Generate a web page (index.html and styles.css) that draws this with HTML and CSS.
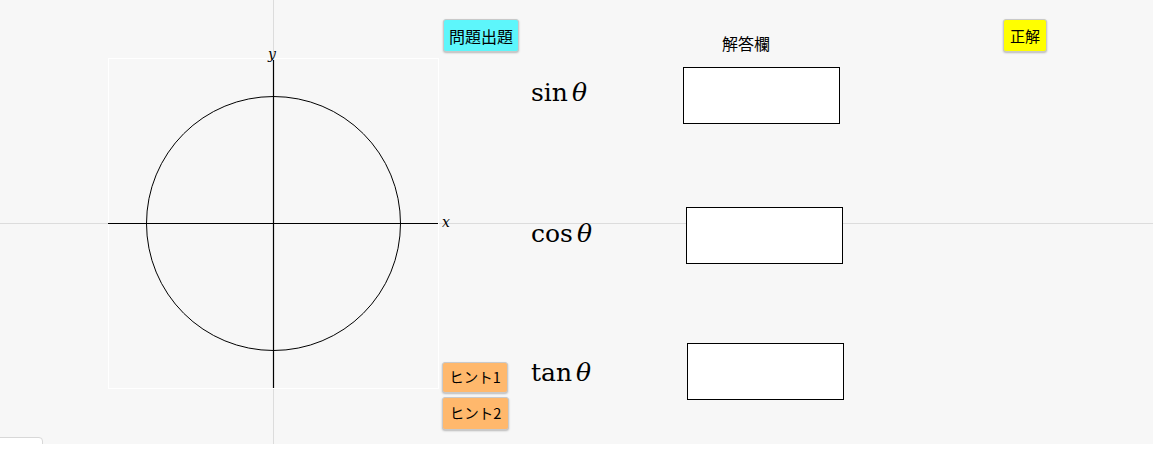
FILE: index.html
```html
<!DOCTYPE html>
<html lang="ja">
<head>
<meta charset="utf-8">
<title>三角比</title>
<link rel="stylesheet" href="styles.css">
</head>
<body>
<div class="applet">
  <div class="canvas">
    <svg class="board" width="1153" height="444" viewBox="0 0 1153 444">
      <line x1="273.5" y1="0" x2="273.5" y2="444" stroke="#dcdcdc" stroke-width="1"/>
      <line x1="0" y1="223.5" x2="1153" y2="223.5" stroke="#dcdcdc" stroke-width="1"/>
      <rect x="108.5" y="58.5" width="330" height="330" fill="#f7f7f7" stroke="#ffffff" stroke-width="1"/>
      <line x1="108" y1="223.5" x2="438" y2="223.5" stroke="#000" stroke-width="1.2"/>
      <line x1="273.5" y1="60" x2="273.5" y2="388" stroke="#000" stroke-width="1.2"/>
      <circle cx="273.5" cy="223.5" r="127" fill="none" stroke="#000" stroke-width="1"/>
      <text x="268" y="59" class="axlabel">y</text>
      <text x="442" y="227" class="axlabel">x</text>
    </svg>

    <button class="btn btn-cyan q-btn">問題出題</button>
    <button class="btn btn-yellow ans-btn">正解</button>
    <button class="btn btn-orange hint1">ヒント1</button>
    <button class="btn btn-orange hint2">ヒント2</button>

    <div class="answer-title">解答欄</div>

    <div class="fn fn-sin">sin<span class="theta">θ</span></div>
    <div class="fn fn-cos">cos<span class="theta">θ</span></div>
    <div class="fn fn-tan">tan<span class="theta">θ</span></div>

    <div class="box box-sin"></div>
    <div class="box box-cos"></div>
    <div class="box box-tan"></div>

    <div class="tab"></div>
  </div>
</div>
</body>
</html>
```

FILE: styles.css
```css
html, body {
  margin: 0;
  padding: 0;
  background: #ffffff;
}

.applet {
  width: 1153px;
  height: 454px;
}

.canvas {
  position: relative;
  width: 1153px;
  height: 444px;
  background: #f7f7f7;
  overflow: hidden;
  font-family: "Liberation Sans", "Noto Sans CJK JP", sans-serif;
}

.board {
  position: absolute;
  left: 0;
  top: 0;
}

.axlabel {
  font-family: "DejaVu Serif", serif;
  font-style: italic;
  font-size: 14px;
  fill: #000;
}

.btn {
  position: absolute;
  margin: 0;
  padding: 0;
  border: 1px solid #c9c9c9;
  border-radius: 3px;
  box-shadow: 0 1px 2px rgba(0, 0, 0, 0.25);
  color: #000;
  font-family: "Noto Sans CJK JP", sans-serif;
  font-size: 16px;
  line-height: 1;
  display: flex;
  align-items: center;
  justify-content: center;
}

.btn-cyan { background: #5df6fb; }
.btn-yellow { background: #ffff00; font-size: 15px; }
.btn-orange { background: #ffb86c; font-size: 14.5px; }

.q-btn { left: 443px; top: 19px; width: 76px; height: 33px; }
.ans-btn { left: 1003px; top: 19px; width: 44px; height: 33px; }
.hint1 { left: 442px; top: 362px; width: 66px; height: 31px; }
.hint2 { left: 442px; top: 397px; width: 67px; height: 33px; }

.answer-title {
  position: absolute;
  left: 722px;
  top: 33px;
  font-family: "Noto Sans CJK JP", sans-serif;
  font-size: 16px;
  line-height: 20px;
  color: #000;
}

.fn {
  position: absolute;
  left: 531px;
  font-family: "DejaVu Serif", "Liberation Serif", serif;
  font-size: 25px;
  line-height: 30px;
  color: #000;
  white-space: nowrap;
}

.theta {
  font-style: italic;
  margin-left: 4px;
}

.fn-sin { top: 78px; }
.fn-cos { top: 219px; }
.fn-tan { top: 358px; }

.box {
  position: absolute;
  width: 155px;
  height: 55px;
  background: #ffffff;
  border: 1px solid #000;
}

.box-sin { left: 683px; top: 67px; }
.box-cos { left: 686px; top: 207px; }
.box-tan { left: 687px; top: 343px; }

.tab {
  position: absolute;
  left: -1px;
  top: 437px;
  width: 42px;
  height: 10px;
  background: #ffffff;
  border: 1px solid #d8d8d8;
  border-radius: 0 4px 0 0;
}
```
